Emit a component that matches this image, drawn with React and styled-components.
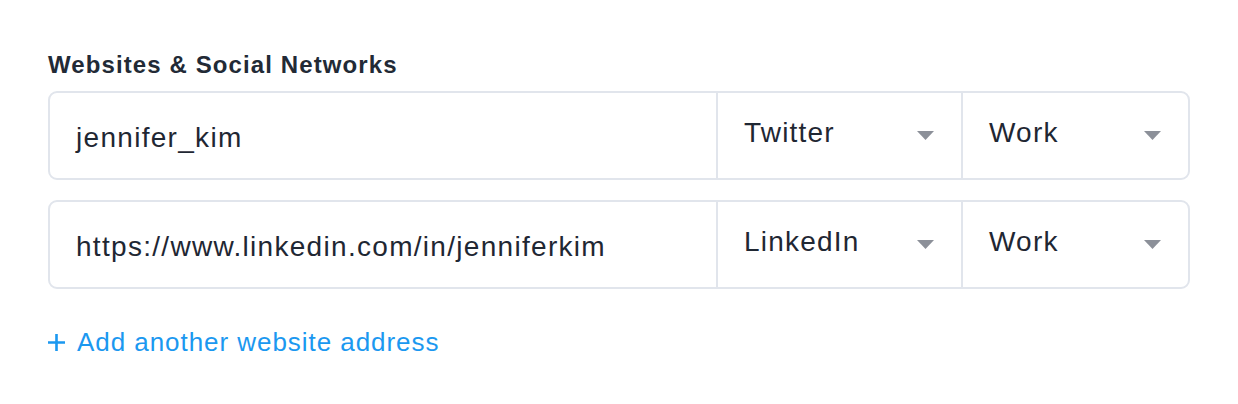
import styled, { createGlobalStyle } from 'styled-components';

const GlobalStyle = createGlobalStyle`
  body {
    margin: 0;
    background: #ffffff;
    font-family: 'Liberation Sans', Arial, sans-serif;
  }
`;

const Section = styled.section`
  padding: 50px 48px 0 48px;
  color: #1f2733;
`;

const Title = styled.h3`
  margin: 0 0 12px;
  font-size: 24px;
  font-weight: 700;
  letter-spacing: 1.1px;
  line-height: 29px;
  color: #222a36;
`;

const List = styled.div`
  display: flex;
  flex-direction: column;
  gap: 20px;
`;

const Row = styled.div`
  display: grid;
  grid-template-columns: 666px 245px 1fr;
  height: 89px;
  box-sizing: border-box;
  border: 2px solid #e1e5ec;
  border-radius: 9px;
  overflow: hidden;
`;

const Field = styled.div`
  display: flex;
  align-items: center;
  padding: 4px 0 0 26px;
  font-size: 28px;
  letter-spacing: 1.3px;
  color: #1f2733;
`;

const Select = styled.div`
  display: flex;
  align-items: center;
  justify-content: space-between;
  padding: 0 27px 6px 26px;
  border-left: 2px solid #e1e5ec;
  font-size: 28px;
  letter-spacing: 1.2px;
  color: #1f2733;

  svg {
    margin-top: 6px;
  }
`;

const AddLink = styled.a`
  display: inline-flex;
  align-items: center;
  gap: 12px;
  margin-top: 38px;
  font-size: 26px;
  letter-spacing: 0.95px;
  color: #1b98f0;
  text-decoration: none;
  cursor: pointer;
`;

const Caret = () => (
  <svg width="17" height="9" viewBox="0 0 17 9">
    <path d="M0 0 H17 L8.5 9 Z" fill="#8c9099" />
  </svg>
);

const Plus = () => (
  <svg width="17" height="17" viewBox="0 0 17 17">
    <path d="M8.5 0 V17 M0 8.5 H17" stroke="#1b98f0" strokeWidth="2.6" />
  </svg>
);

const links = [
  { value: 'jennifer_kim', network: 'Twitter', kind: 'Work' },
  { value: 'https://www.linkedin.com/in/jenniferkim', network: 'LinkedIn', kind: 'Work' },
];

const App = () => (
  <>
    <GlobalStyle />
    <Section>
      <Title>Websites &amp; Social Networks</Title>
      <List>
        {links.map(link => (
          <Row key={link.value}>
            <Field>{link.value}</Field>
            <Select>
              <span>{link.network}</span>
              <Caret />
            </Select>
            <Select>
              <span>{link.kind}</span>
              <Caret />
            </Select>
          </Row>
        ))}
      </List>
      <AddLink>
        <Plus />
        Add another website address
      </AddLink>
    </Section>
  </>
);

export default App;
